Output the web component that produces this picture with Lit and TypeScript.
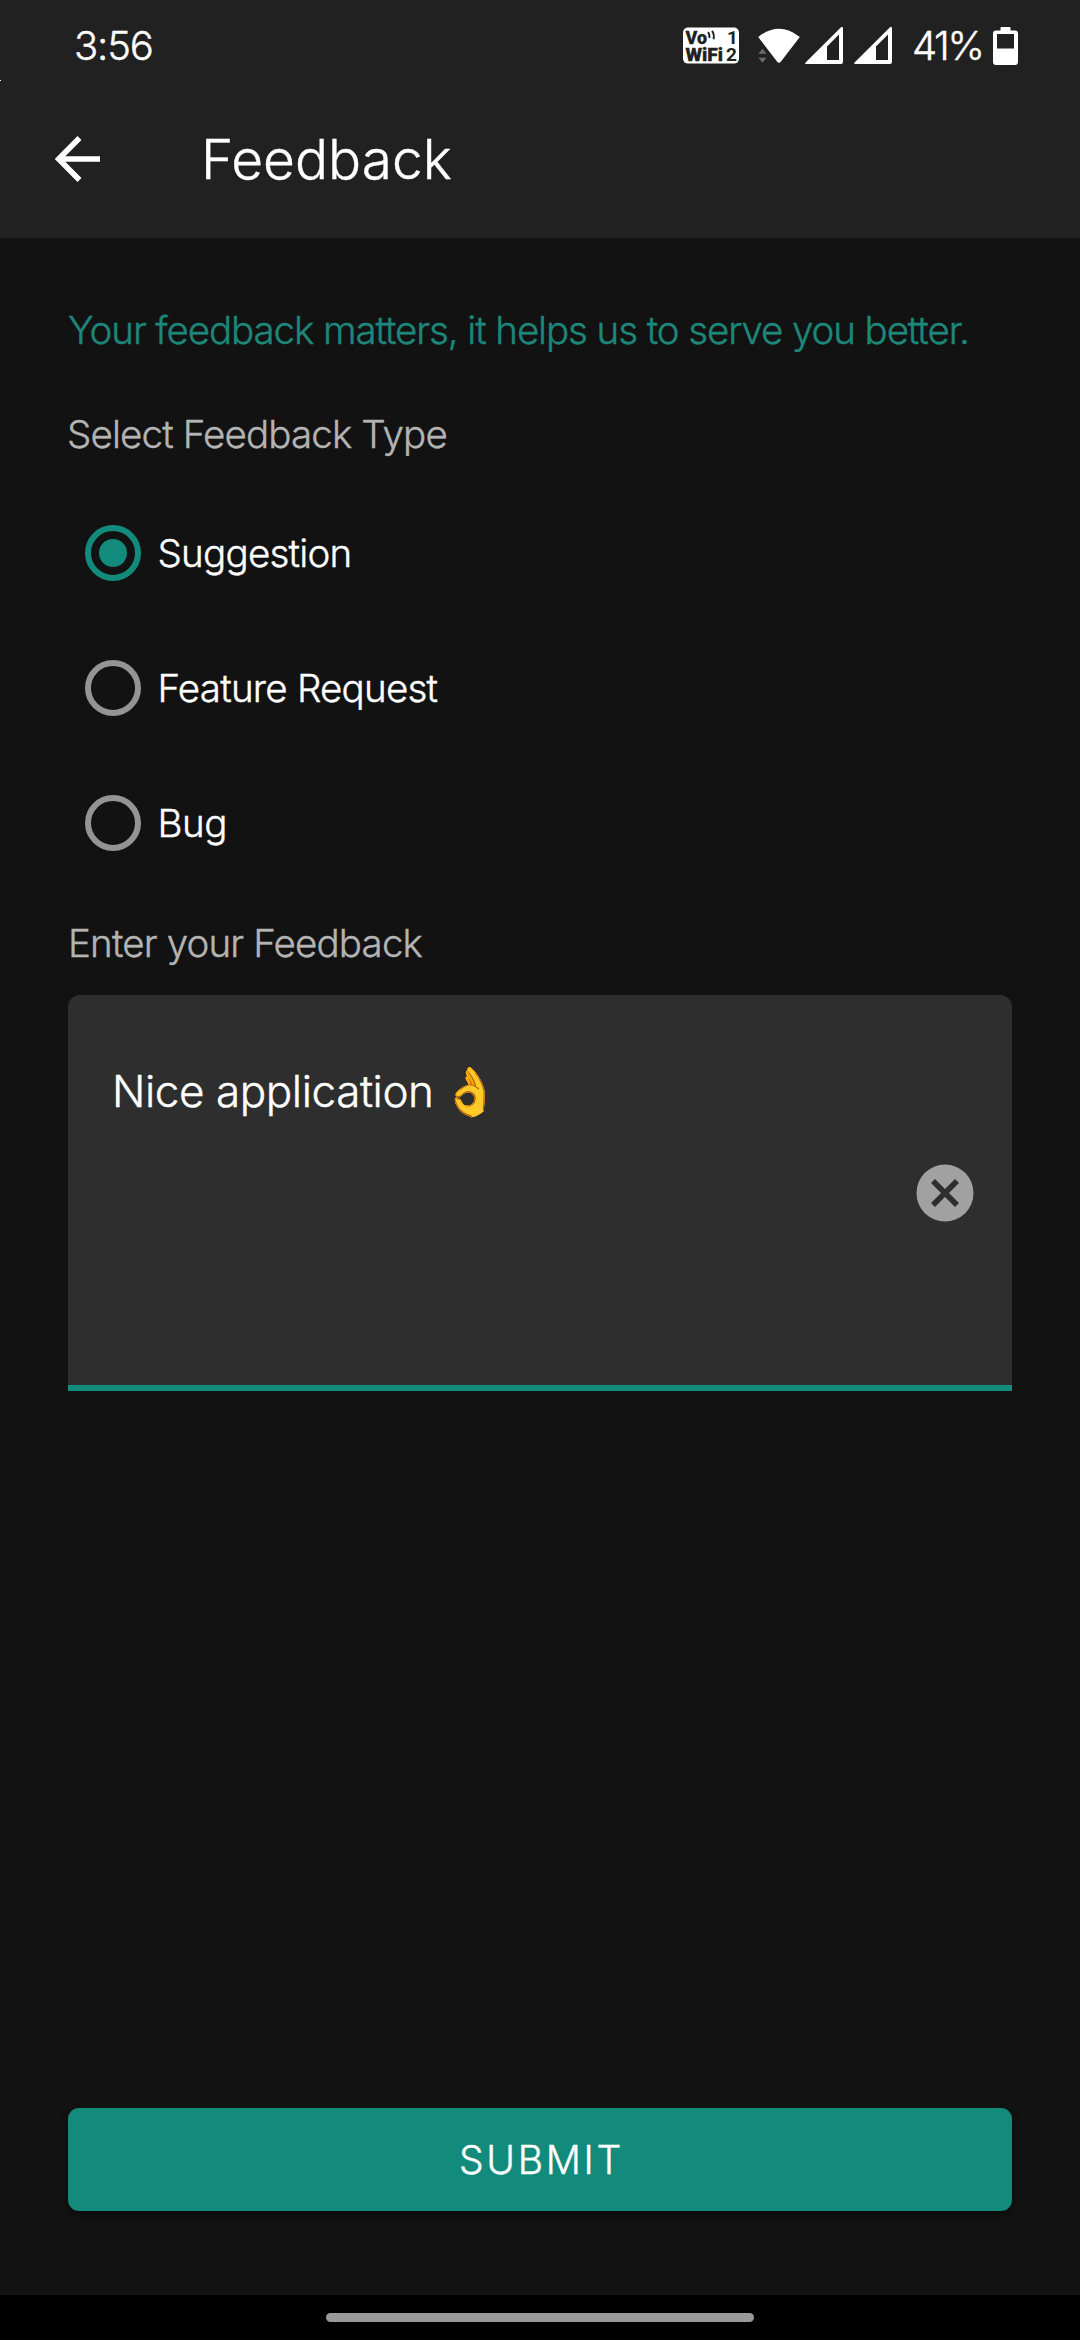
import { LitElement, html, css, svg } from "lit";
import { customElement, property, state } from "lit/decorators.js";
import { classMap } from "lit/directives/class-map.js";

@customElement("status-bar")
class StatusBar extends LitElement {
  static styles = css`
    :host { display: block; }
    .bar {
      box-sizing: border-box;
      height: 80px;
      padding: 12px 62px 0 74px;
      display: flex;
      align-items: center;
      font-size: 40px;
      line-height: 48px;
      color: #fff;
    }
    .time { letter-spacing: -1.2px; margin-right: auto; }
    .icons { display: block; width: 210px; height: 40px; }
    .level { letter-spacing: -2.4px; width: 70px; margin-left: 19px; white-space: nowrap; }
    .battery { display: block; width: 25px; height: 38px; margin-left: 11px; }
    .tag { font: 700 19px Roboto, sans-serif; fill: #212121; stroke: #212121; -webkit-text-stroke: 0; }
    .heavy { font-weight: 900; stroke-width: 0.3; }
    .light { font-weight: 700; stroke-width: 0; }
  `;
  signal(x: number) {
    return svg`<path fill="#fff" fill-rule="evenodd" d="M${x + 36} 1.2Q${x + 38} 0 ${x + 38} 2.5V36Q${x + 38} 38 ${x + 36} 38H${x + 1.5}Q${x - 0.8} 38 ${x + 0.8} 36.2ZM${x + 34} 8.5L${x + 22} 20.5V34H${x + 34}Z"/>`;
  }
  render() {
    return html`
      <div class="bar">
        <span class="time">3:56</span>
        <svg class="icons" viewBox="0 0 210 40">
          <rect x="0" y="1.6" width="56" height="36" rx="5" fill="#fff"/>
          <text class="tag heavy" x="2.5" y="17.5" textLength="21.5" lengthAdjust="spacingAndGlyphs">Vo</text>
          <path d="M25 6.2Q27 8.5 26.3 12M29 4.8Q31.7 8.3 30.5 13.2" fill="none" stroke="#212121" stroke-width="1.9"/>
          <text class="tag light" x="44" y="18">1</text>
          <text class="tag heavy" x="2.5" y="35" textLength="37.5" lengthAdjust="spacingAndGlyphs">WiFi</text>
          <text class="tag light" x="43" y="35">2</text>
          <path d="M75.2 11Q96 -5.5 116.8 11L98 35.5Q96 38 94 35.5Z" fill="#fff"/>
          <path d="M75 28L79.5 22.5L84 28ZM75 31.5H84L79.5 37Z" fill="#6a6a6a" stroke="#212121" stroke-width="0.4"/>
          ${this.signal(122)}${this.signal(171)}
        </svg>
        <span class="level">41%</span>
        <svg class="battery" viewBox="0 0 25 38">
          <path fill="#fff" fill-rule="evenodd" d="M8.5 0H16.5Q17.5 0 17.5 1V3.5H22Q25 3.5 25 6.5V35Q25 38 22 38H3Q0 38 0 35V6.5Q0 3.5 3 3.5H7.5V1Q7.5 0 8.5 0ZM4 7V21.5H21V7Z"/>
        </svg>
      </div>`;
  }
}

@customElement("radio-option")
class RadioOption extends LitElement {
  @property() label = "";
  @property({ type: Number }) tracking = 0;
  @property({ type: Boolean }) checked = false;
  static styles = css`
    :host { display: block; cursor: pointer; }
    .row { display: flex; align-items: center; height: 135px; padding-left: 17px; }
    .ring {
      box-sizing: border-box;
      width: 56px;
      height: 56px;
      border: 6px solid #949494;
      border-radius: 50%;
      display: grid;
      place-items: center;
    }
    .on { border-color: #138b7c; }
    .dot { width: 28px; height: 28px; border-radius: 50%; background: #138b7c; }
    .text { margin-left: 16.5px; color: #fff; font-size: 38.5px; line-height: 40px; }
  `;
  render() {
    return html`
      <div class="row">
        <div class=${classMap({ ring: true, on: this.checked })}>
          ${this.checked ? html`<div class="dot"></div>` : ""}
        </div>
        <span class="text" style="letter-spacing:${this.tracking}px">${this.label}</span>
      </div>`;
  }
}

@customElement("app-root")
class AppRoot extends LitElement {
  @state() private selected = "Suggestion";
  private options: [string, number][] = [
    ["Suggestion", -0.75],
    ["Feature Request", -0.76],
    ["Bug", -0.4],
  ];
  static styles = css`
    :host {
      display: flex;
      flex-direction: column;
      width: 1080px;
      height: 2340px;
      background: #121212;
      font-family: Inter, "Liberation Sans", sans-serif;
      font-weight: 300;
      -webkit-text-stroke: 0.4px currentColor;
      overflow: hidden;
      position: relative;
    }
    .speck { position: absolute; left: 0; top: 80px; width: 1px; height: 1px; background: #fff; }
    .header { background: #212121; height: 238px; }
    .appbar { display: flex; align-items: center; height: 158px; padding-left: 55px; }
    .back { display: block; width: 45px; height: 46px; }
    .title {
      margin: 0 0 0 101px;
      font-size: 55px;
      font-weight: 300;
      line-height: 64px;
      color: #fff;
    }
    .content { flex: 1; display: flex; flex-direction: column; padding: 72px 68px 84px; }
    .line { font-size: 38.5px; line-height: 40px; white-space: nowrap; color: #b4b4b4; }
    .tagline { color: #1d877a; letter-spacing: -1.1px; }
    .pick { margin-top: 64px; letter-spacing: -0.86px; margin-left: -1px; }
    .options { margin-top: 31px; }
    .enter { margin-top: 33px; letter-spacing: -0.84px; }
    .field {
      box-sizing: border-box;
      margin-top: 32px;
      height: 396px;
      padding: 66px 38px 0 44px;
      display: flex;
      justify-content: space-between;
      background: #2e2e2e;
      border-bottom: 6px solid #138b7c;
      border-radius: 12px 12px 0 0;
    }
    .value {
      display: flex;
      align-items: center;
      height: 60px;
      font-size: 44px;
      letter-spacing: -0.43px;
      color: #fff;
      white-space: pre;
    }
    .emoji { font-size: 47px; line-height: 60px; letter-spacing: 0; margin-left: -4px; }
    .clear { display: block; width: 58px; height: 58px; margin-top: 102.5px; }
    .submit {
      margin-top: auto;
      height: 103px;
      display: flex;
      align-items: center;
      justify-content: center;
      border: 0;
      border-radius: 11px;
      background: #138b7c;
      box-shadow: 0 4px 6px rgba(0, 0, 0, 0.4);
      color: #fff;
      font: 300 39px/40px Inter, "Liberation Sans", sans-serif;
      letter-spacing: 2.7px;
      padding: 0 0 0 3px;
    }
    .nav { height: 45px; background: #000; display: flex; justify-content: center; padding-top: 18px; box-sizing: border-box; }
    .pill { width: 428px; height: 9px; border-radius: 5px; background: #999; }
  `;
  render() {
    return html`
      <div class="header">
        <status-bar></status-bar>
        <div class="appbar">
          <svg class="back" viewBox="0 0 45 46">
            <path d="M45 23H4M24.5 2L3.6 23L24.5 44" fill="none" stroke="#fff" stroke-width="5.6"/>
          </svg>
          <h1 class="title">Feedback</h1>
        </div>
      </div>
      <div class="content">
        <div class="line tagline">Your feedback matters, it helps us to serve you better.</div>
        <div class="line pick">Select Feedback Type</div>
        <div class="options">
          ${this.options.map(([o, t]) => html`
            <radio-option .label=${o} .tracking=${t} .checked=${this.selected === o}
              @click=${() => { this.selected = o; }}></radio-option>`)}
        </div>
        <div class="line enter">Enter your Feedback</div>
        <div class="field">
          <div class="value">Nice application <span class="emoji">👌</span></div>
          <svg class="clear" viewBox="0 0 58 58">
            <circle cx="29" cy="29" r="28.5" fill="#a1a1a1"/>
            <path d="M17 17L41 41M41 17L17 41" stroke="#2e2e2e" stroke-width="5.6"/>
          </svg>
        </div>
        <button class="submit">SUBMIT</button>
      </div>
      <div class="nav"><div class="pill"></div></div>
      <div class="speck"></div>`;
  }
}
